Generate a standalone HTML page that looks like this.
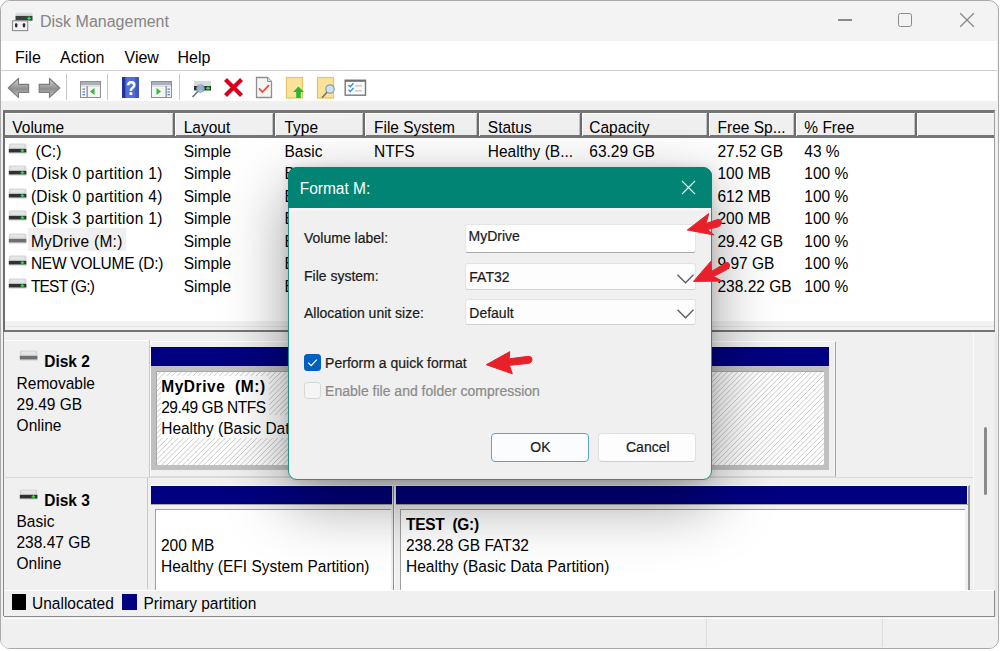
<!DOCTYPE html>
<html><head><meta charset="utf-8"><style>
html,body{margin:0;padding:0;}
body{width:1000px;height:651px;overflow:hidden;position:relative;background:#ffffff;font-family:"Liberation Sans",sans-serif;}
.r{position:absolute;}
.t{position:absolute;white-space:nowrap;line-height:1;}
</style></head><body>
<div class="r" style="left:0px;top:0px;width:998.5px;height:649px;background:#f0f0f0;border:1.3px solid #aaaaaa;border-radius:10px;box-sizing:border-box;"></div>
<div class="r" style="left:1.3px;top:1.3px;width:995.9px;height:39.7px;background:#f3f3f3;border-radius:9px 9px 0 0;"></div>
<svg class="r" style="left:11px;top:11px" width="24" height="22" viewBox="0 0 24 22">
<defs><linearGradient id="ig" x1="0" y1="0" x2="0" y2="1"><stop offset="0" stop-color="#f4f5f7"/><stop offset="1" stop-color="#c3c8ce"/></linearGradient></defs>
<path d="M4.5 5 L4.5 2 Q4.5 0.5 6 0.5 L20 0.5 Q21.5 0.5 21.5 2 L21.5 5 Z" fill="url(#ig)"/>
<rect x="4.5" y="5" width="17" height="4.6" fill="#3b3e41"/>
<path d="M16.2 7.3 h3.8 M18.1 5.6 v3.4" stroke="#2ee03c" stroke-width="1.3"/>
<rect x="1.5" y="9.8" width="15.2" height="9.8" fill="#f2f2f2" stroke="#8f8f8f" stroke-width="1.1"/>
<rect x="4" y="12.2" width="2.4" height="4.2" rx="1.1" fill="#2b2b2b"/>
<rect x="11.8" y="12.2" width="2.4" height="4.2" rx="1.1" fill="#2b2b2b"/>
</svg>
<div class="t" style="left:40.00px;top:13.66px;font-size:16px;color:#858585;font-weight:normal;">Disk Management</div>
<div class="r" style="left:838px;top:19.3px;width:14px;height:1.3px;background:#8a8a8a;"></div>
<div class="r" style="left:898px;top:13px;width:14px;height:14px;border:1.4px solid #8a8a8a;border-radius:2.5px;box-sizing:border-box;"></div>
<svg class="r" style="left:959px;top:12px" width="16" height="16" viewBox="0 0 16 16"><path d="M1.2 1.2 L14.8 14.8 M14.8 1.2 L1.2 14.8" stroke="#8a8a8a" stroke-width="1.35"/></svg>
<div class="r" style="left:1px;top:41px;width:996px;height:29px;background:#ffffff;"></div>
<div class="r" style="left:1px;top:70px;width:996px;height:1px;background:#cfcfcf;"></div>
<div class="t" style="left:15.00px;top:49.56px;font-size:16px;color:#000;font-weight:normal;">File</div>
<div class="t" style="left:60.00px;top:49.56px;font-size:16px;color:#000;font-weight:normal;">Action</div>
<div class="t" style="left:124.50px;top:49.56px;font-size:16px;color:#000;font-weight:normal;">View</div>
<div class="t" style="left:177.50px;top:49.56px;font-size:16px;color:#000;font-weight:normal;">Help</div>
<div class="r" style="left:1px;top:71px;width:996px;height:30px;background:#ffffff;"></div>
<div class="r" style="left:1px;top:101px;width:996px;height:10px;background:#f0f0f0;"></div>
<div class="r" style="left:66px;top:74px;width:1px;height:26px;background:#c8c8c8;"></div>
<div class="r" style="left:107px;top:74px;width:1px;height:26px;background:#c8c8c8;"></div>
<div class="r" style="left:179px;top:74px;width:1px;height:26px;background:#c8c8c8;"></div>
<svg class="r" style="left:0px;top:70px" width="380" height="32" viewBox="0 70 380 32">
<defs>
<linearGradient id="arr" x1="0" y1="0" x2="0" y2="1"><stop offset="0" stop-color="#d8d8d8"/><stop offset="0.55" stop-color="#8f8f8f"/><stop offset="1" stop-color="#c8c8c8"/></linearGradient>
<linearGradient id="hlp" x1="0" y1="0" x2="1" y2="0"><stop offset="0" stop-color="#2d3fae"/><stop offset="0.3" stop-color="#4b68d6"/><stop offset="1" stop-color="#3b55c8"/></linearGradient>
</defs>
<path d="M8.3 88 L18.5 78.5 L18.5 84.4 L28.6 84.4 L28.6 92.5 L18.5 92.5 L18.5 97.4 Z" fill="url(#arr)" stroke="#7c7c7c" stroke-width="1.2" stroke-linejoin="round"/>
<path d="M59.7 88 L49.5 78.5 L49.5 84.4 L39.2 84.4 L39.2 92.5 L49.5 92.5 L49.5 97.4 Z" fill="url(#arr)" stroke="#7c7c7c" stroke-width="1.2" stroke-linejoin="round"/>
<g>
<rect x="80.5" y="81.5" width="20" height="16" fill="#f4f4f4" stroke="#8e8e8e"/>
<rect x="81" y="82" width="19" height="3" fill="#a9b1bb"/>
<rect x="81" y="85.5" width="19" height="1" fill="#c9ced4"/>
<rect x="86.5" y="86" width="1.3" height="11" fill="#8e8e8e"/>
<rect x="82.5" y="88.5" width="2.5" height="1.3" fill="#4a8fd0"/><rect x="82.5" y="91.3" width="2.5" height="1.3" fill="#4a8fd0"/><rect x="82.5" y="94" width="2.5" height="1.3" fill="#4a8fd0"/>
<path d="M90 91.5 L94.5 88 L94.5 95 Z" fill="#39b83a"/>
</g>
<rect x="122" y="77" width="17" height="21" fill="url(#hlp)"/>
<rect x="122" y="77" width="3" height="21" fill="#22349a"/>
<rect x="126" y="77" width="9" height="21" fill="#5b7be0" fill-opacity="0.5"/><text x="0" y="0" transform="translate(131.5 95.3) scale(0.8 1)" font-family="Liberation Sans" font-weight="bold" font-size="20.5" fill="#9aa6c0" text-anchor="middle">?</text><text x="0" y="0" transform="translate(131 95) scale(0.8 1)" font-family="Liberation Sans" font-weight="bold" font-size="20.5" fill="#ffffff" text-anchor="middle">?</text>
<g>
<rect x="151.5" y="81.5" width="20" height="16" fill="#f4f4f4" stroke="#8e8e8e"/>
<rect x="152" y="82" width="19" height="3" fill="#a9b1bb"/>
<rect x="152" y="85.5" width="19" height="1" fill="#c9ced4"/>
<rect x="165.5" y="86" width="1.3" height="11" fill="#8e8e8e"/>
<rect x="167.5" y="88.5" width="2.5" height="1.3" fill="#4a8fd0"/><rect x="167.5" y="91.3" width="2.5" height="1.3" fill="#4a8fd0"/><rect x="167.5" y="94" width="2.5" height="1.3" fill="#4a8fd0"/>
<path d="M156.5 88 L161 91.5 L156.5 95 Z" fill="#39b83a"/>
</g>
<g>
<rect x="194" y="81" width="17" height="5" fill="#d6dade"/>
<rect x="194" y="86" width="17" height="4.5" fill="#2f3235"/>
<path d="M206 88.2 h4 M208 86.5 v3.4" stroke="#2fe23f" stroke-width="1.4"/>
<circle cx="200.5" cy="88.5" r="3.8" fill="#a8c6e6" fill-opacity="0.85" stroke="#7d9ab8" stroke-width="1"/>
<path d="M197.8 91.5 L192.5 97" stroke="#5f6f80" stroke-width="1.6"/>
</g>
<path d="M225.5 79.5 L241.5 95.5 M241.5 79.5 L225.5 95.5" stroke="#d8001c" stroke-width="4.2"/>
<g>
<path d="M256.5 77.5 L267.5 77.5 L271.5 81.5 L271.5 97.5 L256.5 97.5 Z" fill="#f6f6f6" stroke="#8f8f8f" stroke-width="1.3"/>
<path d="M267.5 77.5 L267.5 81.5 L271.5 81.5" fill="#e0e0e0" stroke="#8f8f8f" stroke-width="1"/>
<path d="M259 88.3 L262.5 92 L269 85.2" fill="none" stroke="#e84c3d" stroke-width="1.8"/>
</g>
<g>
<rect x="286.5" y="77.5" width="16" height="20.5" fill="#fbe29a" stroke="#e9c45a" stroke-width="1.2"/>
<path d="M298.5 86.5 L304 92 L300.8 92 L300.8 98 L296.2 98 L296.2 92 L293 92 Z" fill="#27b737"/>
</g>
<g>
<rect x="317.5" y="77.5" width="16" height="20.5" fill="#fbe29a" stroke="#e9c45a" stroke-width="1.2"/>
<circle cx="330" cy="89" r="4.2" fill="#cfe2f3" stroke="#8c9cab" stroke-width="1.2"/>
<path d="M327 92.2 L322 97.8" stroke="#6f7378" stroke-width="1.6"/>
</g>
<g>
<rect x="345.2" y="80.2" width="20.3" height="15" fill="#fafafa" stroke="#7a7a7a" stroke-width="1.4"/>
<rect x="345" y="80" width="21" height="1.8" fill="#6f6f6f"/>
<path d="M348.5 85 L350.3 86.8 L353.5 83.2 M348.5 89.8 L350.3 91.6 L353.5 88" fill="none" stroke="#2f8be0" stroke-width="1.3"/>
<rect x="355" y="85.2" width="7" height="1.2" fill="#bdbdbd"/><rect x="355" y="90.2" width="7" height="1.2" fill="#bdbdbd"/>
</g>
</svg>
<div class="r" style="left:3px;top:110px;width:992px;height:2.6px;background:#767676;"></div>
<div class="r" style="left:3px;top:111px;width:1px;height:220px;background:#a0a0a0;"></div>
<div class="r" style="left:994px;top:111px;width:1px;height:220px;background:#a0a0a0;"></div>
<div class="r" style="left:4px;top:113px;width:990px;height:210px;background:#ffffff;"></div>
<div class="r" style="left:4px;top:113px;width:990px;height:24px;background:#f0f0f0;"></div>
<div class="r" style="left:4px;top:135.2px;width:990px;height:2.5px;background:#767676;"></div>
<div class="r" style="left:4px;top:113px;width:170px;height:1px;background:#ffffff;"></div>
<div class="r" style="left:4px;top:113px;width:1px;height:23px;background:#ffffff;"></div>
<div class="r" style="left:173px;top:112.5px;width:2px;height:24px;background:#6c6c6c;"></div>
<div class="r" style="left:172px;top:114px;width:1px;height:21px;background:#c4c4c4;"></div>
<div class="r" style="left:175px;top:113px;width:99px;height:1px;background:#ffffff;"></div>
<div class="r" style="left:175px;top:113px;width:1px;height:23px;background:#ffffff;"></div>
<div class="r" style="left:273px;top:112.5px;width:2px;height:24px;background:#6c6c6c;"></div>
<div class="r" style="left:272px;top:114px;width:1px;height:21px;background:#c4c4c4;"></div>
<div class="r" style="left:275px;top:113px;width:89px;height:1px;background:#ffffff;"></div>
<div class="r" style="left:275px;top:113px;width:1px;height:23px;background:#ffffff;"></div>
<div class="r" style="left:363px;top:112.5px;width:2px;height:24px;background:#6c6c6c;"></div>
<div class="r" style="left:362px;top:114px;width:1px;height:21px;background:#c4c4c4;"></div>
<div class="r" style="left:365px;top:113px;width:113px;height:1px;background:#ffffff;"></div>
<div class="r" style="left:365px;top:113px;width:1px;height:23px;background:#ffffff;"></div>
<div class="r" style="left:477px;top:112.5px;width:2px;height:24px;background:#6c6c6c;"></div>
<div class="r" style="left:476px;top:114px;width:1px;height:21px;background:#c4c4c4;"></div>
<div class="r" style="left:479px;top:113px;width:102px;height:1px;background:#ffffff;"></div>
<div class="r" style="left:479px;top:113px;width:1px;height:23px;background:#ffffff;"></div>
<div class="r" style="left:580px;top:112.5px;width:2px;height:24px;background:#6c6c6c;"></div>
<div class="r" style="left:579px;top:114px;width:1px;height:21px;background:#c4c4c4;"></div>
<div class="r" style="left:582px;top:113px;width:126px;height:1px;background:#ffffff;"></div>
<div class="r" style="left:582px;top:113px;width:1px;height:23px;background:#ffffff;"></div>
<div class="r" style="left:707px;top:112.5px;width:2px;height:24px;background:#6c6c6c;"></div>
<div class="r" style="left:706px;top:114px;width:1px;height:21px;background:#c4c4c4;"></div>
<div class="r" style="left:709px;top:113px;width:86px;height:1px;background:#ffffff;"></div>
<div class="r" style="left:709px;top:113px;width:1px;height:23px;background:#ffffff;"></div>
<div class="r" style="left:794px;top:112.5px;width:2px;height:24px;background:#6c6c6c;"></div>
<div class="r" style="left:793px;top:114px;width:1px;height:21px;background:#c4c4c4;"></div>
<div class="r" style="left:796px;top:113px;width:120px;height:1px;background:#ffffff;"></div>
<div class="r" style="left:796px;top:113px;width:1px;height:23px;background:#ffffff;"></div>
<div class="r" style="left:915px;top:112.5px;width:2px;height:24px;background:#6c6c6c;"></div>
<div class="r" style="left:914px;top:114px;width:1px;height:21px;background:#c4c4c4;"></div>
<div class="r" style="left:917px;top:113px;width:77px;height:1px;background:#ffffff;"></div>
<div class="r" style="left:917px;top:113px;width:1px;height:23px;background:#ffffff;"></div>
<div class="t" style="left:12.30px;top:119.68px;font-size:15.5px;color:#000;font-weight:normal;transform:scaleY(1.1);transform-origin:0 13.12px;">Volume</div>
<div class="t" style="left:183.70px;top:119.68px;font-size:15.5px;color:#000;font-weight:normal;transform:scaleY(1.1);transform-origin:0 13.12px;">Layout</div>
<div class="t" style="left:284.50px;top:119.68px;font-size:15.5px;color:#000;font-weight:normal;transform:scaleY(1.1);transform-origin:0 13.12px;">Type</div>
<div class="t" style="left:374.00px;top:119.68px;font-size:15.5px;color:#000;font-weight:normal;transform:scaleY(1.1);transform-origin:0 13.12px;">File System</div>
<div class="t" style="left:487.80px;top:119.68px;font-size:15.5px;color:#000;font-weight:normal;transform:scaleY(1.1);transform-origin:0 13.12px;">Status</div>
<div class="t" style="left:589.30px;top:119.68px;font-size:15.5px;color:#000;font-weight:normal;transform:scaleY(1.1);transform-origin:0 13.12px;">Capacity</div>
<div class="t" style="left:717.50px;top:119.68px;font-size:15.5px;color:#000;font-weight:normal;transform:scaleY(1.1);transform-origin:0 13.12px;">Free Sp...</div>
<div class="t" style="left:804.30px;top:119.68px;font-size:15.5px;color:#000;font-weight:normal;transform:scaleY(1.1);transform-origin:0 13.12px;">% Free</div>
<div class="r" style="left:28px;top:228px;width:98px;height:23px;background:#efefef;"></div>
<svg class="r" style="left:8px;top:143px" width="20" height="12" viewBox="0 0 20 12">
<path d="M0.8 5.8 L0.8 1.6 L1.8 0.4 L17.2 0.4 L18.4 1.6 L18.4 5.8 Z" fill="#d4d6d8"/>
<rect x="2.5" y="1.6" width="14" height="3" fill="#e4e6e8"/>
<rect x="0.8" y="5.8" width="17.6" height="3.9" fill="#2f3235"/>
<rect x="0.8" y="9.7" width="17.6" height="1" fill="#d6d8da"/>
<path d="M12.6 7.75 h3.6 M14.4 6.1 v3.3" stroke="#2fd23c" stroke-width="1.5"/>
</svg>
<div class="t" style="left:35.50px;top:143.78px;font-size:15.5px;color:#000;font-weight:normal;transform:scaleY(1.1);transform-origin:0 13.12px;">(C:)</div>
<div class="t" style="left:183.70px;top:143.78px;font-size:15.5px;color:#000;font-weight:normal;transform:scaleY(1.1);transform-origin:0 13.12px;">Simple</div>
<div class="t" style="left:284.50px;top:143.78px;font-size:15.5px;color:#000;font-weight:normal;transform:scaleY(1.1);transform-origin:0 13.12px;">Basic</div>
<div class="t" style="left:374.00px;top:143.78px;font-size:15.5px;color:#000;font-weight:normal;transform:scaleY(1.1);transform-origin:0 13.12px;">NTFS</div>
<div class="t" style="left:487.80px;top:143.78px;font-size:15.5px;color:#000;font-weight:normal;transform:scaleY(1.1);transform-origin:0 13.12px;">Healthy (B...</div>
<div class="t" style="left:589.30px;top:143.78px;font-size:15.5px;color:#000;font-weight:normal;transform:scaleY(1.1);transform-origin:0 13.12px;">63.29 GB</div>
<div class="t" style="left:717.50px;top:143.78px;font-size:15.5px;color:#000;font-weight:normal;transform:scaleY(1.1);transform-origin:0 13.12px;">27.52 GB</div>
<div class="t" style="left:804.30px;top:143.78px;font-size:15.5px;color:#000;font-weight:normal;transform:scaleY(1.1);transform-origin:0 13.12px;">43 %</div>
<svg class="r" style="left:8px;top:165px" width="20" height="12" viewBox="0 0 20 12">
<path d="M0.8 5.8 L0.8 1.6 L1.8 0.4 L17.2 0.4 L18.4 1.6 L18.4 5.8 Z" fill="#d4d6d8"/>
<rect x="2.5" y="1.6" width="14" height="3" fill="#e4e6e8"/>
<rect x="0.8" y="5.8" width="17.6" height="3.9" fill="#2f3235"/>
<rect x="0.8" y="9.7" width="17.6" height="1" fill="#d6d8da"/>
<path d="M12.6 7.75 h3.6 M14.4 6.1 v3.3" stroke="#2fd23c" stroke-width="1.5"/>
</svg>
<div class="t" style="left:30.90px;top:166.25px;font-size:15.5px;color:#000;font-weight:normal;transform:scaleY(1.1);transform-origin:0 13.12px;letter-spacing:0.3px;">(Disk 0 partition 1)</div>
<div class="t" style="left:183.70px;top:166.25px;font-size:15.5px;color:#000;font-weight:normal;transform:scaleY(1.1);transform-origin:0 13.12px;">Simple</div>
<div class="t" style="left:284.50px;top:166.25px;font-size:15.5px;color:#000;font-weight:normal;transform:scaleY(1.1);transform-origin:0 13.12px;">Basic</div>
<div class="t" style="left:374.00px;top:166.25px;font-size:15.5px;color:#000;font-weight:normal;transform:scaleY(1.1);transform-origin:0 13.12px;">FAT32</div>
<div class="t" style="left:487.80px;top:166.25px;font-size:15.5px;color:#000;font-weight:normal;transform:scaleY(1.1);transform-origin:0 13.12px;">Healthy (E...</div>
<div class="t" style="left:589.30px;top:166.25px;font-size:15.5px;color:#000;font-weight:normal;transform:scaleY(1.1);transform-origin:0 13.12px;">100 MB</div>
<div class="t" style="left:717.50px;top:166.25px;font-size:15.5px;color:#000;font-weight:normal;transform:scaleY(1.1);transform-origin:0 13.12px;">100 MB</div>
<div class="t" style="left:804.30px;top:166.25px;font-size:15.5px;color:#000;font-weight:normal;transform:scaleY(1.1);transform-origin:0 13.12px;">100 %</div>
<svg class="r" style="left:8px;top:188px" width="20" height="12" viewBox="0 0 20 12">
<path d="M0.8 5.8 L0.8 1.6 L1.8 0.4 L17.2 0.4 L18.4 1.6 L18.4 5.8 Z" fill="#d4d6d8"/>
<rect x="2.5" y="1.6" width="14" height="3" fill="#e4e6e8"/>
<rect x="0.8" y="5.8" width="17.6" height="3.9" fill="#2f3235"/>
<rect x="0.8" y="9.7" width="17.6" height="1" fill="#d6d8da"/>
<path d="M12.6 7.75 h3.6 M14.4 6.1 v3.3" stroke="#2fd23c" stroke-width="1.5"/>
</svg>
<div class="t" style="left:30.90px;top:188.72px;font-size:15.5px;color:#000;font-weight:normal;transform:scaleY(1.1);transform-origin:0 13.12px;letter-spacing:0.3px;">(Disk 0 partition 4)</div>
<div class="t" style="left:183.70px;top:188.72px;font-size:15.5px;color:#000;font-weight:normal;transform:scaleY(1.1);transform-origin:0 13.12px;">Simple</div>
<div class="t" style="left:284.50px;top:188.72px;font-size:15.5px;color:#000;font-weight:normal;transform:scaleY(1.1);transform-origin:0 13.12px;">Basic</div>
<div class="t" style="left:374.00px;top:188.72px;font-size:15.5px;color:#000;font-weight:normal;transform:scaleY(1.1);transform-origin:0 13.12px;">NTFS</div>
<div class="t" style="left:487.80px;top:188.72px;font-size:15.5px;color:#000;font-weight:normal;transform:scaleY(1.1);transform-origin:0 13.12px;">Healthy (R...</div>
<div class="t" style="left:589.30px;top:188.72px;font-size:15.5px;color:#000;font-weight:normal;transform:scaleY(1.1);transform-origin:0 13.12px;">612 MB</div>
<div class="t" style="left:717.50px;top:188.72px;font-size:15.5px;color:#000;font-weight:normal;transform:scaleY(1.1);transform-origin:0 13.12px;">612 MB</div>
<div class="t" style="left:804.30px;top:188.72px;font-size:15.5px;color:#000;font-weight:normal;transform:scaleY(1.1);transform-origin:0 13.12px;">100 %</div>
<svg class="r" style="left:8px;top:210px" width="20" height="12" viewBox="0 0 20 12">
<path d="M0.8 5.8 L0.8 1.6 L1.8 0.4 L17.2 0.4 L18.4 1.6 L18.4 5.8 Z" fill="#d4d6d8"/>
<rect x="2.5" y="1.6" width="14" height="3" fill="#e4e6e8"/>
<rect x="0.8" y="5.8" width="17.6" height="3.9" fill="#2f3235"/>
<rect x="0.8" y="9.7" width="17.6" height="1" fill="#d6d8da"/>
<path d="M12.6 7.75 h3.6 M14.4 6.1 v3.3" stroke="#2fd23c" stroke-width="1.5"/>
</svg>
<div class="t" style="left:30.90px;top:211.19px;font-size:15.5px;color:#000;font-weight:normal;transform:scaleY(1.1);transform-origin:0 13.12px;letter-spacing:0.3px;">(Disk 3 partition 1)</div>
<div class="t" style="left:183.70px;top:211.19px;font-size:15.5px;color:#000;font-weight:normal;transform:scaleY(1.1);transform-origin:0 13.12px;">Simple</div>
<div class="t" style="left:284.50px;top:211.19px;font-size:15.5px;color:#000;font-weight:normal;transform:scaleY(1.1);transform-origin:0 13.12px;">Basic</div>
<div class="t" style="left:374.00px;top:211.19px;font-size:15.5px;color:#000;font-weight:normal;transform:scaleY(1.1);transform-origin:0 13.12px;">FAT32</div>
<div class="t" style="left:487.80px;top:211.19px;font-size:15.5px;color:#000;font-weight:normal;transform:scaleY(1.1);transform-origin:0 13.12px;">Healthy (E...</div>
<div class="t" style="left:589.30px;top:211.19px;font-size:15.5px;color:#000;font-weight:normal;transform:scaleY(1.1);transform-origin:0 13.12px;">200 MB</div>
<div class="t" style="left:717.50px;top:211.19px;font-size:15.5px;color:#000;font-weight:normal;transform:scaleY(1.1);transform-origin:0 13.12px;">200 MB</div>
<div class="t" style="left:804.30px;top:211.19px;font-size:15.5px;color:#000;font-weight:normal;transform:scaleY(1.1);transform-origin:0 13.12px;">100 %</div>
<svg class="r" style="left:8px;top:233px" width="20" height="12" viewBox="0 0 20 12">
<path d="M0.8 5.8 L0.8 1.6 L1.8 0.4 L17.2 0.4 L18.4 1.6 L18.4 5.8 Z" fill="#d4d6d8"/>
<rect x="2.5" y="1.6" width="14" height="3" fill="#e4e6e8"/>
<rect x="0.8" y="5.8" width="17.6" height="3.9" fill="#6d6f71"/>
<rect x="0.8" y="9.7" width="17.6" height="1" fill="#d6d8da"/>

</svg>
<div class="t" style="left:30.90px;top:233.66px;font-size:15.5px;color:#000;font-weight:normal;transform:scaleY(1.1);transform-origin:0 13.12px;letter-spacing:0.25px;">MyDrive (M:)</div>
<div class="t" style="left:183.70px;top:233.66px;font-size:15.5px;color:#000;font-weight:normal;transform:scaleY(1.1);transform-origin:0 13.12px;">Simple</div>
<div class="t" style="left:284.50px;top:233.66px;font-size:15.5px;color:#000;font-weight:normal;transform:scaleY(1.1);transform-origin:0 13.12px;">Basic</div>
<div class="t" style="left:374.00px;top:233.66px;font-size:15.5px;color:#000;font-weight:normal;transform:scaleY(1.1);transform-origin:0 13.12px;">NTFS</div>
<div class="t" style="left:487.80px;top:233.66px;font-size:15.5px;color:#000;font-weight:normal;transform:scaleY(1.1);transform-origin:0 13.12px;">Healthy (B...</div>
<div class="t" style="left:589.30px;top:233.66px;font-size:15.5px;color:#000;font-weight:normal;transform:scaleY(1.1);transform-origin:0 13.12px;">29.49 GB</div>
<div class="t" style="left:717.50px;top:233.66px;font-size:15.5px;color:#000;font-weight:normal;transform:scaleY(1.1);transform-origin:0 13.12px;">29.42 GB</div>
<div class="t" style="left:804.30px;top:233.66px;font-size:15.5px;color:#000;font-weight:normal;transform:scaleY(1.1);transform-origin:0 13.12px;">100 %</div>
<svg class="r" style="left:8px;top:255px" width="20" height="12" viewBox="0 0 20 12">
<path d="M0.8 5.8 L0.8 1.6 L1.8 0.4 L17.2 0.4 L18.4 1.6 L18.4 5.8 Z" fill="#d4d6d8"/>
<rect x="2.5" y="1.6" width="14" height="3" fill="#e4e6e8"/>
<rect x="0.8" y="5.8" width="17.6" height="3.9" fill="#2f3235"/>
<rect x="0.8" y="9.7" width="17.6" height="1" fill="#d6d8da"/>
<path d="M12.6 7.75 h3.6 M14.4 6.1 v3.3" stroke="#2fd23c" stroke-width="1.5"/>
</svg>
<div class="t" style="left:30.90px;top:256.13px;font-size:15.5px;color:#000;font-weight:normal;transform:scaleY(1.1);transform-origin:0 13.12px;letter-spacing:-0.25px;">NEW VOLUME (D:)</div>
<div class="t" style="left:183.70px;top:256.13px;font-size:15.5px;color:#000;font-weight:normal;transform:scaleY(1.1);transform-origin:0 13.12px;">Simple</div>
<div class="t" style="left:284.50px;top:256.13px;font-size:15.5px;color:#000;font-weight:normal;transform:scaleY(1.1);transform-origin:0 13.12px;">Basic</div>
<div class="t" style="left:374.00px;top:256.13px;font-size:15.5px;color:#000;font-weight:normal;transform:scaleY(1.1);transform-origin:0 13.12px;">NTFS</div>
<div class="t" style="left:487.80px;top:256.13px;font-size:15.5px;color:#000;font-weight:normal;transform:scaleY(1.1);transform-origin:0 13.12px;">Healthy (B...</div>
<div class="t" style="left:589.30px;top:256.13px;font-size:15.5px;color:#000;font-weight:normal;transform:scaleY(1.1);transform-origin:0 13.12px;">9.97 GB</div>
<div class="t" style="left:717.50px;top:256.13px;font-size:15.5px;color:#000;font-weight:normal;transform:scaleY(1.1);transform-origin:0 13.12px;">9.97 GB</div>
<div class="t" style="left:804.30px;top:256.13px;font-size:15.5px;color:#000;font-weight:normal;transform:scaleY(1.1);transform-origin:0 13.12px;">100 %</div>
<svg class="r" style="left:8px;top:278px" width="20" height="12" viewBox="0 0 20 12">
<path d="M0.8 5.8 L0.8 1.6 L1.8 0.4 L17.2 0.4 L18.4 1.6 L18.4 5.8 Z" fill="#d4d6d8"/>
<rect x="2.5" y="1.6" width="14" height="3" fill="#e4e6e8"/>
<rect x="0.8" y="5.8" width="17.6" height="3.9" fill="#2f3235"/>
<rect x="0.8" y="9.7" width="17.6" height="1" fill="#d6d8da"/>
<path d="M12.6 7.75 h3.6 M14.4 6.1 v3.3" stroke="#2fd23c" stroke-width="1.5"/>
</svg>
<div class="t" style="left:30.90px;top:278.60px;font-size:15.5px;color:#000;font-weight:normal;transform:scaleY(1.1);transform-origin:0 13.12px;letter-spacing:-0.8px;">TEST (G:)</div>
<div class="t" style="left:183.70px;top:278.60px;font-size:15.5px;color:#000;font-weight:normal;transform:scaleY(1.1);transform-origin:0 13.12px;">Simple</div>
<div class="t" style="left:284.50px;top:278.60px;font-size:15.5px;color:#000;font-weight:normal;transform:scaleY(1.1);transform-origin:0 13.12px;">Basic</div>
<div class="t" style="left:374.00px;top:278.60px;font-size:15.5px;color:#000;font-weight:normal;transform:scaleY(1.1);transform-origin:0 13.12px;">FAT32</div>
<div class="t" style="left:487.80px;top:278.60px;font-size:15.5px;color:#000;font-weight:normal;transform:scaleY(1.1);transform-origin:0 13.12px;">Healthy (B...</div>
<div class="t" style="left:589.30px;top:278.60px;font-size:15.5px;color:#000;font-weight:normal;transform:scaleY(1.1);transform-origin:0 13.12px;">238.28 GB</div>
<div class="t" style="left:717.50px;top:278.60px;font-size:15.5px;color:#000;font-weight:normal;transform:scaleY(1.1);transform-origin:0 13.12px;">238.22 GB</div>
<div class="t" style="left:804.30px;top:278.60px;font-size:15.5px;color:#000;font-weight:normal;transform:scaleY(1.1);transform-origin:0 13.12px;">100 %</div>
<div class="r" style="left:4px;top:321px;width:990px;height:9px;background:#f2f2f2;"></div>
<div class="r" style="left:4px;top:326px;width:990px;height:1px;background:#e4e4e4;"></div>
<div class="r" style="left:3px;top:330px;width:992px;height:2px;background:#767676;"></div>
<div class="r" style="left:3px;top:111px;width:1.5px;height:221px;background:#6e6e6e;"></div>
<div class="r" style="left:3px;top:332px;width:1.3px;height:284px;background:#8a8a8a;"></div>
<div class="r" style="left:995px;top:332px;width:1.5px;height:284px;background:#e6e6e6;"></div>
<div class="r" style="left:973px;top:332px;width:1px;height:257px;background:#fafafa;"></div>
<div class="r" style="left:983.5px;top:427px;width:3px;height:68px;background:#8a8a8a;border-radius:1.5px;"></div>
<div class="r" style="left:5px;top:339.5px;width:144px;height:1px;background:#ffffff;"></div>
<div class="r" style="left:148.5px;top:340px;width:1px;height:137px;background:#c8c8c8;"></div>
<div class="r" style="left:149.5px;top:340.5px;width:686.5px;height:136px;border:1px solid #ffffff;border-right-color:#a8a8a8;border-bottom-color:#dadada;box-sizing:border-box;"></div>
<div class="r" style="left:5px;top:477px;width:968px;height:1px;background:#d9d9d9;"></div>
<svg class="r" style="left:19px;top:350px" width="20" height="12" viewBox="0 0 20 12">
<path d="M0.8 5.8 L0.8 1.6 L1.8 0.4 L17.2 0.4 L18.4 1.6 L18.4 5.8 Z" fill="#d4d6d8"/>
<rect x="2.5" y="1.6" width="14" height="3" fill="#e4e6e8"/>
<rect x="0.8" y="5.8" width="17.6" height="3.9" fill="#6d6f71"/>
<rect x="0.8" y="9.7" width="17.6" height="1" fill="#d6d8da"/>

</svg>
<div class="t" style="left:44.20px;top:354.28px;font-size:15.5px;color:#000;font-weight:bold;transform:scaleY(1.1);transform-origin:0 13.12px;">Disk 2</div>
<div class="t" style="left:16.60px;top:375.88px;font-size:15.5px;color:#000;font-weight:normal;transform:scaleY(1.1);transform-origin:0 13.12px;">Removable</div>
<div class="t" style="left:16.60px;top:397.18px;font-size:15.5px;color:#000;font-weight:normal;transform:scaleY(1.1);transform-origin:0 13.12px;">29.49 GB</div>
<div class="t" style="left:16.60px;top:418.28px;font-size:15.5px;color:#000;font-weight:normal;transform:scaleY(1.1);transform-origin:0 13.12px;">Online</div>
<div class="r" style="left:151px;top:347px;width:678px;height:19px;background:#000080;"></div>
<div class="r" style="left:151px;top:366px;width:678px;height:104px;background:#c0c0c0;"></div>
<div class="r" style="left:156px;top:371px;width:668px;height:94px;background:#ffffff;"></div>
<svg class="r" style="left:156px;top:371px" width="668" height="94" viewBox="0 0 668 94"><path d="M-94.00 94 L0.00 0 M-88.75 94 L5.25 0 M-83.50 94 L10.50 0 M-78.25 94 L15.75 0 M-73.00 94 L21.00 0 M-67.75 94 L26.25 0 M-62.50 94 L31.50 0 M-57.25 94 L36.75 0 M-52.00 94 L42.00 0 M-46.75 94 L47.25 0 M-41.50 94 L52.50 0 M-36.25 94 L57.75 0 M-31.00 94 L63.00 0 M-25.75 94 L68.25 0 M-20.50 94 L73.50 0 M-15.25 94 L78.75 0 M-10.00 94 L84.00 0 M-4.75 94 L89.25 0 M0.50 94 L94.50 0 M5.75 94 L99.75 0 M11.00 94 L105.00 0 M16.25 94 L110.25 0 M21.50 94 L115.50 0 M26.75 94 L120.75 0 M32.00 94 L126.00 0 M37.25 94 L131.25 0 M42.50 94 L136.50 0 M47.75 94 L141.75 0 M53.00 94 L147.00 0 M58.25 94 L152.25 0 M63.50 94 L157.50 0 M68.75 94 L162.75 0 M74.00 94 L168.00 0 M79.25 94 L173.25 0 M84.50 94 L178.50 0 M89.75 94 L183.75 0 M95.00 94 L189.00 0 M100.25 94 L194.25 0 M105.50 94 L199.50 0 M110.75 94 L204.75 0 M116.00 94 L210.00 0 M121.25 94 L215.25 0 M126.50 94 L220.50 0 M131.75 94 L225.75 0 M137.00 94 L231.00 0 M142.25 94 L236.25 0 M147.50 94 L241.50 0 M152.75 94 L246.75 0 M158.00 94 L252.00 0 M163.25 94 L257.25 0 M168.50 94 L262.50 0 M173.75 94 L267.75 0 M179.00 94 L273.00 0 M184.25 94 L278.25 0 M189.50 94 L283.50 0 M194.75 94 L288.75 0 M200.00 94 L294.00 0 M205.25 94 L299.25 0 M210.50 94 L304.50 0 M215.75 94 L309.75 0 M221.00 94 L315.00 0 M226.25 94 L320.25 0 M231.50 94 L325.50 0 M236.75 94 L330.75 0 M242.00 94 L336.00 0 M247.25 94 L341.25 0 M252.50 94 L346.50 0 M257.75 94 L351.75 0 M263.00 94 L357.00 0 M268.25 94 L362.25 0 M273.50 94 L367.50 0 M278.75 94 L372.75 0 M284.00 94 L378.00 0 M289.25 94 L383.25 0 M294.50 94 L388.50 0 M299.75 94 L393.75 0 M305.00 94 L399.00 0 M310.25 94 L404.25 0 M315.50 94 L409.50 0 M320.75 94 L414.75 0 M326.00 94 L420.00 0 M331.25 94 L425.25 0 M336.50 94 L430.50 0 M341.75 94 L435.75 0 M347.00 94 L441.00 0 M352.25 94 L446.25 0 M357.50 94 L451.50 0 M362.75 94 L456.75 0 M368.00 94 L462.00 0 M373.25 94 L467.25 0 M378.50 94 L472.50 0 M383.75 94 L477.75 0 M389.00 94 L483.00 0 M394.25 94 L488.25 0 M399.50 94 L493.50 0 M404.75 94 L498.75 0 M410.00 94 L504.00 0 M415.25 94 L509.25 0 M420.50 94 L514.50 0 M425.75 94 L519.75 0 M431.00 94 L525.00 0 M436.25 94 L530.25 0 M441.50 94 L535.50 0 M446.75 94 L540.75 0 M452.00 94 L546.00 0 M457.25 94 L551.25 0 M462.50 94 L556.50 0 M467.75 94 L561.75 0 M473.00 94 L567.00 0 M478.25 94 L572.25 0 M483.50 94 L577.50 0 M488.75 94 L582.75 0 M494.00 94 L588.00 0 M499.25 94 L593.25 0 M504.50 94 L598.50 0 M509.75 94 L603.75 0 M515.00 94 L609.00 0 M520.25 94 L614.25 0 M525.50 94 L619.50 0 M530.75 94 L624.75 0 M536.00 94 L630.00 0 M541.25 94 L635.25 0 M546.50 94 L640.50 0 M551.75 94 L645.75 0 M557.00 94 L651.00 0 M562.25 94 L656.25 0 M567.50 94 L661.50 0 M572.75 94 L666.75 0 M578.00 94 L672.00 0 M583.25 94 L677.25 0 M588.50 94 L682.50 0 M593.75 94 L687.75 0 M599.00 94 L693.00 0 M604.25 94 L698.25 0 M609.50 94 L703.50 0 M614.75 94 L708.75 0 M620.00 94 L714.00 0 M625.25 94 L719.25 0 M630.50 94 L724.50 0 M635.75 94 L729.75 0 M641.00 94 L735.00 0 M646.25 94 L740.25 0 M651.50 94 L745.50 0 M656.75 94 L750.75 0 M662.00 94 L756.00 0 M667.25 94 L761.25 0 M672.50 94 L766.50 0" stroke="#c4c4c4" stroke-width="0.9"/></svg>
<div class="r" style="left:156px;top:371px;width:668px;height:1.2px;background:#a8a8a8;"></div>
<div class="r" style="left:156px;top:371px;width:1.2px;height:94px;background:#a8a8a8;"></div>
<div class="r" style="left:160.5px;top:376px;width:108.5px;height:62px;background:#ffffff;"></div>
<div class="r" style="left:160.5px;top:415px;width:400px;height:23px;background:#ffffff;"></div>
<div class="t" style="left:161.20px;top:378.68px;font-size:15.5px;color:#000;font-weight:bold;transform:scaleY(1.1);transform-origin:0 13.12px;letter-spacing:0.55px;">MyDrive&nbsp;&nbsp;(M:)</div>
<div class="t" style="left:161.20px;top:399.78px;font-size:15.5px;color:#000;font-weight:normal;transform:scaleY(1.1);transform-origin:0 13.12px;letter-spacing:-0.45px;">29.49 GB NTFS</div>
<div class="t" style="left:161.20px;top:420.88px;font-size:15.5px;color:#000;font-weight:normal;transform:scaleY(1.1);transform-origin:0 13.12px;">Healthy (Basic Data Partition)</div>
<svg class="r" style="left:19px;top:489px" width="20" height="12" viewBox="0 0 20 12">
<path d="M0.8 5.8 L0.8 1.6 L1.8 0.4 L17.2 0.4 L18.4 1.6 L18.4 5.8 Z" fill="#d4d6d8"/>
<rect x="2.5" y="1.6" width="14" height="3" fill="#e4e6e8"/>
<rect x="0.8" y="5.8" width="17.6" height="3.9" fill="#2d2e30"/>
<rect x="0.8" y="9.7" width="17.6" height="1" fill="#d6d8da"/>
<path d="M12.6 7.75 h3.6 M14.4 6.1 v3.3" stroke="#2fd23c" stroke-width="1.5"/>
</svg>
<div class="t" style="left:44.20px;top:492.68px;font-size:15.5px;color:#000;font-weight:bold;transform:scaleY(1.1);transform-origin:0 13.12px;">Disk 3</div>
<div class="t" style="left:16.50px;top:513.68px;font-size:15.5px;color:#000;font-weight:normal;transform:scaleY(1.1);transform-origin:0 13.12px;">Basic</div>
<div class="t" style="left:16.50px;top:534.58px;font-size:15.5px;color:#000;font-weight:normal;transform:scaleY(1.1);transform-origin:0 13.12px;">238.47 GB</div>
<div class="t" style="left:16.50px;top:555.78px;font-size:15.5px;color:#000;font-weight:normal;transform:scaleY(1.1);transform-origin:0 13.12px;">Online</div>
<div class="r" style="left:147px;top:478px;width:1px;height:111px;background:#c8c8c8;"></div>
<div class="r" style="left:150.6px;top:486px;width:241.4px;height:18.4px;background:#000080;"></div>
<div class="r" style="left:396.2px;top:486px;width:571.2px;height:18.4px;background:#000080;"></div>
<div class="r" style="left:150.6px;top:504.4px;width:241.7px;height:86px;background:#f0f0f0;border-top:1px solid #a8a8a8;box-sizing:border-box;"></div>
<div class="r" style="left:155.2px;top:508.8px;width:236px;height:82px;background:#ffffff;border-left:1.5px solid #a0a0a0;border-top:1.5px solid #a0a0a0;box-sizing:border-box;"></div>
<div class="r" style="left:392.5px;top:486px;width:1px;height:104px;background:#8e8e8e;"></div>
<div class="r" style="left:393.5px;top:486px;width:1.2px;height:104px;background:#ffffff;"></div>
<div class="r" style="left:396.2px;top:504.4px;width:571.4px;height:86px;background:#f0f0f0;border-top:1px solid #a8a8a8;box-sizing:border-box;"></div>
<div class="r" style="left:400.3px;top:508.8px;width:564.3px;height:82px;background:#ffffff;border-left:1.5px solid #a0a0a0;border-top:1.5px solid #a0a0a0;box-sizing:border-box;"></div>
<div class="r" style="left:967.6px;top:485px;width:2px;height:105px;background:#9a9a9a;"></div>
<div class="r" style="left:150.6px;top:485px;width:818px;height:1px;background:#ffffff;"></div>
<div class="t" style="left:161.00px;top:538.48px;font-size:15.5px;color:#000;font-weight:normal;transform:scaleY(1.1);transform-origin:0 13.12px;">200 MB</div>
<div class="t" style="left:161.00px;top:559.48px;font-size:15.5px;color:#000;font-weight:normal;transform:scaleY(1.1);transform-origin:0 13.12px;">Healthy (EFI System Partition)</div>
<div class="t" style="left:406.00px;top:516.98px;font-size:15.5px;color:#000;font-weight:bold;transform:scaleY(1.1);transform-origin:0 13.12px;letter-spacing:-0.3px;">TEST&nbsp;&nbsp;(G:)</div>
<div class="t" style="left:406.00px;top:538.08px;font-size:15.5px;color:#000;font-weight:normal;transform:scaleY(1.1);transform-origin:0 13.12px;">238.28 GB FAT32</div>
<div class="t" style="left:406.00px;top:559.28px;font-size:15.5px;color:#000;font-weight:normal;transform:scaleY(1.1);transform-origin:0 13.12px;">Healthy (Basic Data Partition)</div>
<div class="r" style="left:4px;top:589.5px;width:991px;height:27px;background:#f0f0f0;border-top:1px solid #ffffff;border-right:1.5px solid #8a8a8a;border-bottom:1.5px solid #8a8a8a;box-sizing:border-box;"></div>
<div class="r" style="left:11.5px;top:594.2px;width:14px;height:16.3px;background:#000000;"></div>
<div class="t" style="left:32.00px;top:595.58px;font-size:15.5px;color:#000;font-weight:normal;transform:scaleY(1.1);transform-origin:0 13.12px;">Unallocated</div>
<div class="r" style="left:122.1px;top:594.2px;width:14.9px;height:16.3px;background:#000080;"></div>
<div class="t" style="left:143.50px;top:595.58px;font-size:15.5px;color:#000;font-weight:normal;transform:scaleY(1.1);transform-origin:0 13.12px;">Primary partition</div>
<div class="r" style="left:1.3px;top:616.5px;width:995.9px;height:31.2px;background:#f0f0f0;border-radius:0 0 8px 8px;"></div>
<div class="r" style="left:3px;top:617.5px;width:991px;height:1.2px;background:#ffffff;"></div>
<div class="r" style="left:706px;top:619px;width:1px;height:28px;background:#dcdcdc;"></div>
<div class="r" style="left:882px;top:619px;width:1px;height:28px;background:#dcdcdc;"></div>
<div class="r" style="left:288px;top:167px;width:424px;height:313px;background:#f0f0f0;border:1.5px solid #209583;border-radius:9px;box-sizing:border-box;box-shadow:0 22px 64px rgba(0,0,0,0.40),0 0 10px rgba(0,0,0,0.12);overflow:hidden;"></div>
<div class="r" style="left:288px;top:167px;width:424px;height:41px;background:#018473;border-radius:9px 9px 0 0;"></div>
<div class="r" style="left:289px;top:208px;width:422px;height:1.5px;background:#faf8f8;"></div>
<div class="t" style="left:299.70px;top:181.48px;font-size:15.5px;color:#ffffff;font-weight:normal;transform:scaleY(1.03);transform-origin:0 13.12px;">Format M:</div>
<svg class="r" style="left:681px;top:179.5px" width="15" height="15" viewBox="0 0 15 15"><path d="M1 1 L14 14 M14 1 L1 14" stroke="#ffffff" stroke-width="1.1"/></svg>
<div class="t" style="left:304.00px;top:231.15px;font-size:14px;color:#1a1a1a;font-weight:normal;transform:scaleY(1.1);transform-origin:0 11.85px;-webkit-text-stroke:0.2px #1a1a1a;">Volume label:</div>
<div class="t" style="left:304.00px;top:268.55px;font-size:14px;color:#1a1a1a;font-weight:normal;transform:scaleY(1.1);transform-origin:0 11.85px;-webkit-text-stroke:0.2px #1a1a1a;">File system:</div>
<div class="t" style="left:304.00px;top:305.75px;font-size:14px;color:#1a1a1a;font-weight:normal;transform:scaleY(1.1);transform-origin:0 11.85px;-webkit-text-stroke:0.2px #1a1a1a;">Allocation unit size:</div>
<div class="r" style="left:464.9px;top:224.1px;width:231.4px;height:29.4px;background:#ffffff;border:1px solid #e6e6e6;border-bottom:1px solid #a9a9a9;border-radius:3px;box-sizing:border-box;"></div>
<div class="t" style="left:468.50px;top:229.15px;font-size:14px;color:#1a1a1a;font-weight:normal;transform:scaleY(1.1);transform-origin:0 11.85px;-webkit-text-stroke:0.2px #1a1a1a;">MyDrive</div>
<div class="r" style="left:464.9px;top:263.1px;width:231.4px;height:27.3px;background:#fdfdfd;border:1px solid #e3e3e3;border-bottom-color:#d2d2d2;border-radius:3px;box-sizing:border-box;"></div>
<div class="t" style="left:469.30px;top:270.15px;font-size:14px;color:#1a1a1a;font-weight:normal;transform:scaleY(1.1);transform-origin:0 11.85px;-webkit-text-stroke:0.2px #1a1a1a;">FAT32</div>
<svg class="r" style="left:676px;top:272.5px" width="19" height="12" viewBox="0 0 19 12"><path d="M1.5 1.8 L9.5 9.8 L17.5 1.8" fill="none" stroke="#5a5a5a" stroke-width="1.3"/></svg>
<div class="r" style="left:464.9px;top:298.7px;width:231.4px;height:26.8px;background:#fdfdfd;border:1px solid #e3e3e3;border-bottom-color:#d2d2d2;border-radius:3px;box-sizing:border-box;"></div>
<div class="t" style="left:469.30px;top:305.85px;font-size:14px;color:#1a1a1a;font-weight:normal;transform:scaleY(1.1);transform-origin:0 11.85px;-webkit-text-stroke:0.2px #1a1a1a;">Default</div>
<svg class="r" style="left:676px;top:308.2px" width="19" height="12" viewBox="0 0 19 12"><path d="M1.5 1.8 L9.5 9.8 L17.5 1.8" fill="none" stroke="#5a5a5a" stroke-width="1.3"/></svg>
<div class="r" style="left:303.5px;top:354.3px;width:17.2px;height:17px;background:#0060c0;border-radius:3.5px;"></div>
<svg class="r" style="left:303.5px;top:354.3px" width="17" height="17" viewBox="0 0 17 17"><path d="M4.3 8.8 L7.2 11.6 L12.8 5.6" fill="none" stroke="#ffffff" stroke-width="1.2"/></svg>
<div class="t" style="left:325.10px;top:356.25px;font-size:14px;color:#1a1a1a;font-weight:normal;transform:scaleY(1.1);transform-origin:0 11.85px;-webkit-text-stroke:0.2px #1a1a1a;">Perform a quick format</div>
<div class="r" style="left:303.5px;top:381.6px;width:17.2px;height:17px;background:#f5f5f5;border:1px solid #d6d6d6;border-radius:3.5px;box-sizing:border-box;"></div>
<div class="t" style="left:325.10px;top:384.05px;font-size:14px;color:#8a8a8a;font-weight:normal;transform:scaleY(1.1);transform-origin:0 11.85px;-webkit-text-stroke:0.2px #8a8a8a;">Enable file and folder compression</div>
<div class="r" style="left:491.3px;top:432.7px;width:97.8px;height:29.1px;background:#fbfcfe;border:1px solid #5d9fe0;border-radius:4px;box-sizing:border-box;"></div>
<div class="t" style="left:530.30px;top:440.35px;font-size:14px;color:#1a1a1a;font-weight:normal;transform:scaleY(1.1);transform-origin:0 11.85px;-webkit-text-stroke:0.2px #1a1a1a;">OK</div>
<div class="r" style="left:598.2px;top:432.7px;width:98px;height:29.1px;background:#fdfdfd;border:1px solid #e1e1e1;border-bottom-color:#cfcfcf;border-radius:4px;box-sizing:border-box;"></div>
<div class="t" style="left:626.00px;top:440.35px;font-size:14px;color:#1a1a1a;font-weight:normal;transform:scaleY(1.1);transform-origin:0 11.85px;-webkit-text-stroke:0.2px #1a1a1a;">Cancel</div>
<svg class="r" style="left:0;top:0" width="1000" height="651" viewBox="0 0 1000 651">
<g fill="#e8202a" stroke="#e8202a" stroke-linejoin="round">
<path d="M687.3 230 L708.8 213.5 L706 223.5 L717.5 219.5 Q721.5 219 721.3 223 Q721 226 717.5 227 L707.5 229.5 L714 235 Z" stroke-width="1"/>
<path d="M693.5 281.4 L710.7 261.4 L711.5 271.5 L725.5 263 Q729 261.5 729.6 265 Q730 268 726.5 269.8 L713.5 276.5 L722.2 281.1 Z" stroke-width="1"/>
<path d="M486.3 364.7 L509.7 351.7 L509.2 358.8 L527.5 356.4 Q531.8 356 532 359.5 Q532 363 527.8 363.5 L509.5 365.3 L512.3 373.8 Z" stroke-width="1"/>
</g>
</svg>
</body></html>
